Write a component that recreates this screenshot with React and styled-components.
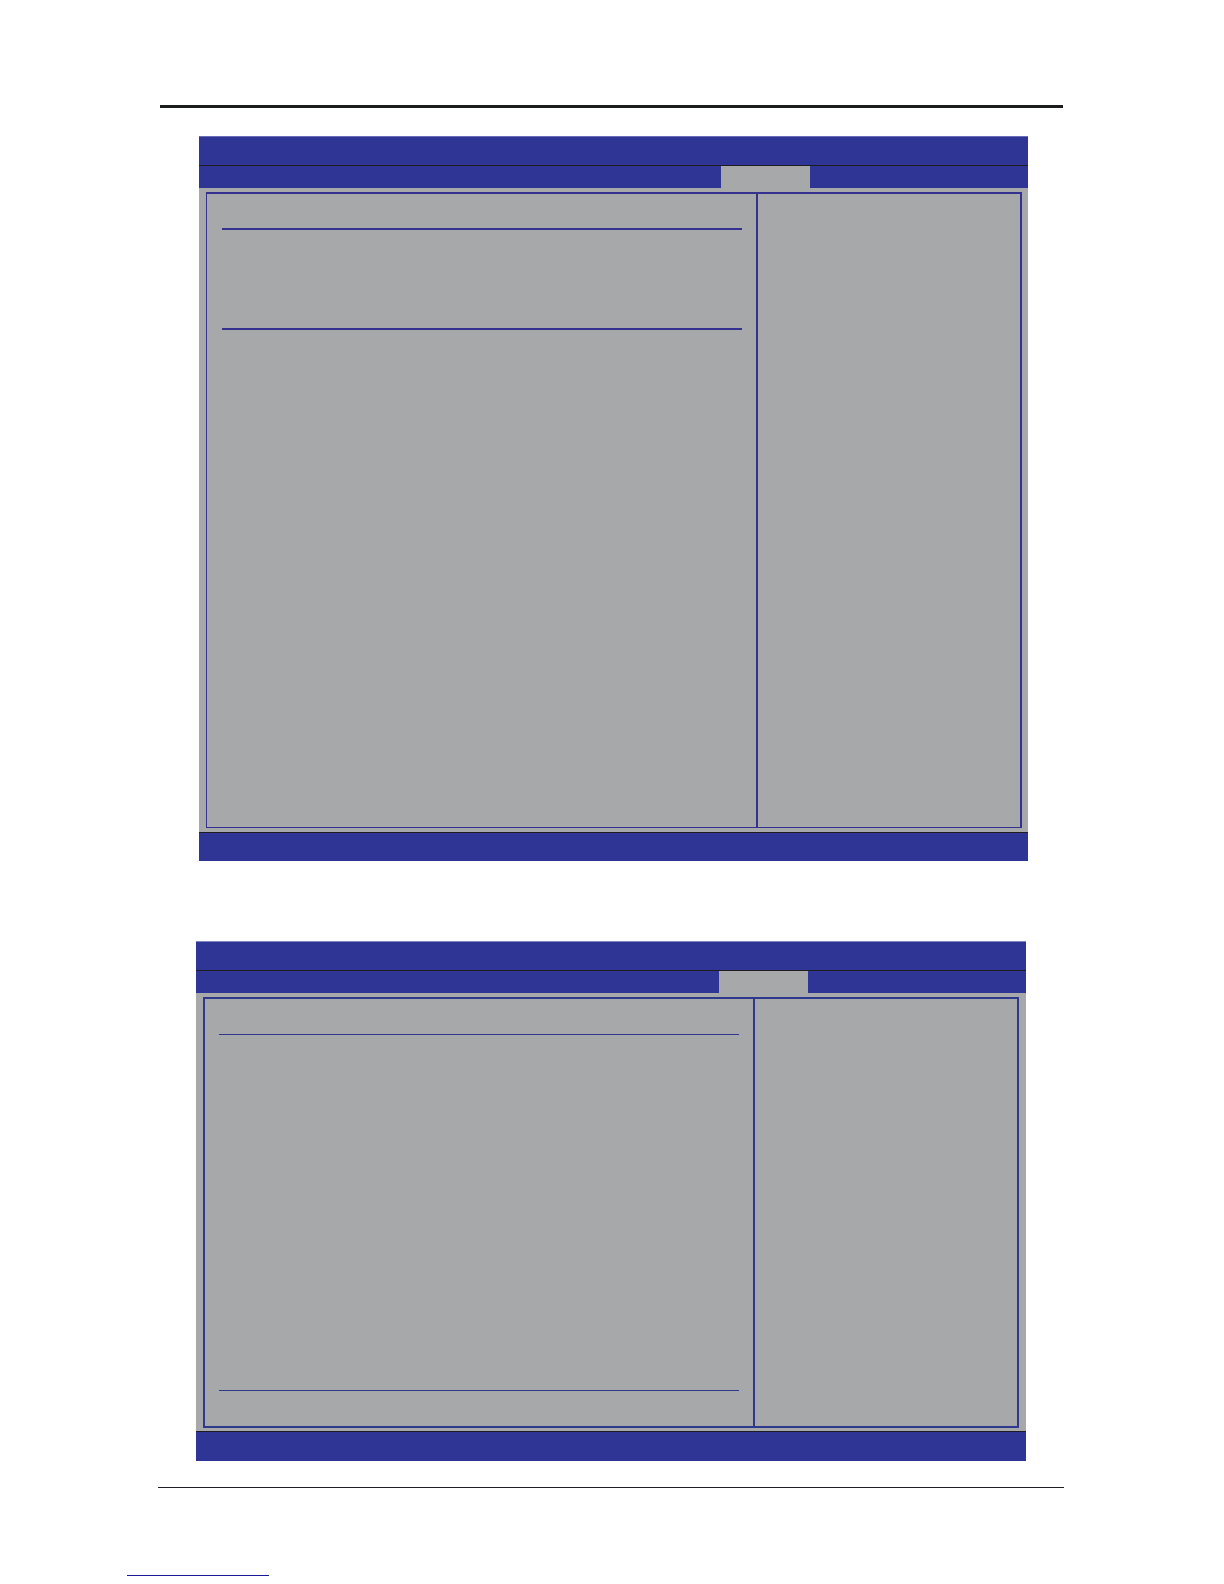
import React from "react";
import styled, { createGlobalStyle } from "styled-components";

const BLUE = "#2e3595";
const GREY = "#a7a8aa";
const BLACK = "#1c1c22";

const SetupScreen = ({ line, edge, frame, inset, gutter, rule, heading, info, options, footer }) => (
  <Screen>
    <TitleBar $edge={edge} />
    <TabBar>
      <TabSpace />
      <ActiveTab />
      <TabEnd />
    </TabBar>
    <Body $inset={inset}>
      <Frame $line={line} $widths={frame}>
        <Main $gutter={gutter}>
          <Section $height={heading} />
          <Rule $size={rule} $color={line} />
          <Section $height={info} />
          <Rule $size={rule} $color={line} />
          <Section $height={options} />
        </Main>
        <Help $line={line} />
      </Frame>
    </Body>
    <KeyBar $height={footer} />
  </Screen>
);

const App = () => (
  <>
    <GlobalStyle />
    <Page>
      <Header>
        <Rule $size={3} $color="#1b1c1c" />
      </Header>
      <Screens>
        <ScreenRow $left={39} $right={36}>
          <SetupScreen
            line="#35318f"
            edge="#6c6fb8"
            frame="2px 2px 1px 1px"
            inset="4px 6px 4px 7px"
            gutter="0 14px 0 15px"
            rule={2}
            heading={34}
            info={98}
            options={497}
            footer={29}
          />
        </ScreenRow>
        <ScreenRow $left={36} $right={38}>
          <SetupScreen
            line="#2e388c"
            edge="#8087c4"
            frame="2px"
            inset="4px 7px 3px 7px"
            gutter="0 14px"
            rule={1}
            heading={35}
            info={355}
            options={35}
            footer={30}
          />
        </ScreenRow>
      </Screens>
      <Footer>
        <Rule $size={1} $color={BLACK} />
      </Footer>
      <Underline />
    </Page>
  </>
);

export default App;

const GlobalStyle = createGlobalStyle`
  * {
    box-sizing: border-box;
  }
  body {
    margin: 0;
    background: #ffffff;
    font-family: "Liberation Sans", Arial, sans-serif;
  }
`;

const Page = styled.div`
  display: flex;
  flex-direction: column;
  padding: 105px 0 8px;
`;

const Header = styled.header`
  margin: 0 161px 28px 160px;
`;

const Screens = styled.main`
  display: flex;
  flex-direction: column;
  gap: 80px;
  margin: 0 160px;
`;

const ScreenRow = styled.div`
  padding-left: ${({ $left }) => $left}px;
  padding-right: ${({ $right }) => $right}px;
`;

const Screen = styled.section`
  background: ${GREY};
`;

const TitleBar = styled.div`
  height: 29px;
  background: ${BLUE};
  border-top: 1px solid ${({ $edge }) => $edge};
`;

const TabBar = styled.div`
  display: flex;
  height: 23px;
  border-top: 1px solid ${BLACK};
`;

const TabSpace = styled.div`
  flex: 1;
  background: ${BLUE};
`;

const ActiveTab = styled.div`
  width: 89px;
  background: ${GREY};
`;

const TabEnd = styled.div`
  width: 218px;
  background: ${BLUE};
`;

const Body = styled.div`
  padding: ${({ $inset }) => $inset};
`;

const Frame = styled.div`
  display: flex;
  border: solid ${({ $line }) => $line};
  border-width: ${({ $widths }) => $widths};
`;

const Main = styled.div`
  flex: 1;
  padding: ${({ $gutter }) => $gutter};
`;

const Section = styled.div`
  min-height: ${({ $height }) => $height}px;
`;

const Rule = styled.hr`
  height: ${({ $size }) => $size}px;
  margin: 0;
  border: 0;
  background: ${({ $color }) => $color};
`;

const Help = styled.aside`
  width: 264px;
  border-left: 2px solid ${({ $line }) => $line};
`;

const KeyBar = styled.div`
  height: ${({ $height }) => $height}px;
  background: ${BLUE};
  border-top: 1px solid ${BLACK};
`;

const Footer = styled.footer`
  margin: 26px 160px 0 158px;
`;

const Underline = styled.hr`
  width: 142px;
  height: 1px;
  margin: 87px 0 0 127px;
  border: 0;
  background: #1a1a9c;
`;
